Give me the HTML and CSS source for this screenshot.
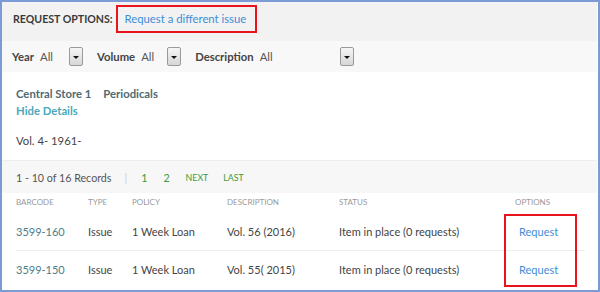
FILE: index.html
```html
<!DOCTYPE html>
<html lang="en">
<head>
  <meta charset="UTF-8">
  <title>Request options</title>
  <link rel="stylesheet" href="styles.css">
</head>
<body>
  <div class="frame">
    <div class="options-bar">
      <span class="options-label">REQUEST OPTIONS:</span>
      <a class="boxed different-issue">Request a different issue</a>
    </div>

    <div class="filters">
      <span class="filter-name">Year</span>
      <span class="filter-value">All</span>
      <span class="drop"></span>
      <span class="filter-name">Volume</span>
      <span class="filter-value narrow">All</span>
      <span class="drop"></span>
      <span class="filter-name">Description</span>
      <span class="filter-value wide">All</span>
      <span class="drop"></span>
    </div>

    <div class="details">
      <div class="location">
        <span>Central Store 1</span>
        <span>Periodicals</span>
      </div>
      <a class="hide-details">Hide Details</a>
      <div class="holdings">Vol. 4- 1961-</div>
    </div>

    <div class="pager">
      <span class="records">1 - 10 of 16 Records</span>
      <span class="sep">|</span>
      <a class="page">1</a>
      <a class="page">2</a>
      <a class="page small">NEXT</a>
      <a class="page small">LAST</a>
    </div>

    <div class="items">
      <table>
        <thead>
          <tr>
            <th class="c-barcode">BARCODE</th>
            <th class="c-type">TYPE</th>
            <th class="c-policy">POLICY</th>
            <th class="c-desc">DESCRIPTION</th>
            <th class="c-status">STATUS</th>
            <th class="c-opt">OPTIONS</th>
          </tr>
        </thead>
        <tbody>
          <tr>
            <td><a class="barcode">3599-160</a></td>
            <td>Issue</td>
            <td>1 Week Loan</td>
            <td>Vol. 56 (2016)</td>
            <td>Item in place (0 requests)</td>
            <td class="c-opt"><a class="request">Request</a></td>
          </tr>
          <tr class="last">
            <td><a class="barcode">3599-150</a></td>
            <td>Issue</td>
            <td>1 Week Loan</td>
            <td>Vol. 55( 2015)</td>
            <td>Item in place (0 requests)</td>
            <td class="c-opt"><a class="request">Request</a></td>
          </tr>
        </tbody>
      </table>
      <div class="request-box"></div>
    </div>
  </div>
</body>
</html>
```

FILE: styles.css
```css
body {
  margin: 0;
  font-family: Lato, "Open Sans", sans-serif;
  color: #444;
}
.frame {
  width: 600px;
  height: 292px;
  box-sizing: border-box;
  border: 2px solid #7c9ad6;
  padding-right: 1px;
  overflow: hidden;
  background: #fff;
}
.options-bar {
  height: 34px;
  padding-bottom: 5px;
  background: #f2f2f2;
  display: flex;
  align-items: center;
  padding-left: 11px;
}
.options-label {
  font-weight: bold;
  font-size: 10.6px;
  color: #3a3a3a;
}
.boxed {
  border: 2px solid #e8131b;
  padding: 5px 9px 6px 7px;
  line-height: 13px;
  margin-left: 3px;
}
.different-issue {
  color: #3d8ed6;
  font-size: 11.3px;
}
.filters {
  height: 31px;
  background: #f8f8f8;
  display: flex;
  align-items: center;
  padding-left: 10px;
  font-size: 11.3px;
}
.filter-name {
  font-weight: bold;
  color: #444;
}
.filter-value {
  color: #555;
  margin-left: 6px;
  width: 29px;
}
.filter-value.narrow {
  width: 26px;
}
.filter-value.wide {
  width: 80px;
}
.drop {
  width: 12px;
  height: 17px;
  border: 1px solid #9a9a9a;
  border-radius: 2px;
  background: linear-gradient(#f6f6f6, #d6d6d6);
  margin-right: 14px;
  position: relative;
}
.drop::after {
  content: "";
  position: absolute;
  left: 3px;
  top: 8px;
  border-left: 3px solid transparent;
  border-right: 3px solid transparent;
  border-top: 3px solid #111;
}
.details {
  padding: 14px 14px 0;
  height: 74px;
  font-size: 11.3px;
  line-height: 16px;
}
.location {
  display: flex;
  gap: 12px;
  font-weight: bold;
  color: #4d6b73;
}
.hide-details {
  display: block;
  margin-top: 1px;
  font-weight: bold;
  color: #4aa9bb;
}
.holdings {
  margin-top: 14px;
  color: #444;
}
.pager {
  height: 32px;
  background: #f7f7f7;
  border-top: 1px solid #eee;
  display: flex;
  align-items: center;
  padding-left: 14px;
  font-size: 10.7px;
}
.records {
  color: #555;
}
.sep {
  color: #ccc;
  margin: 0 14px 0 13px;
}
.page {
  color: #3c9a3c;
  margin-right: 16px;
}
.page.small {
  font-size: 8.8px;
  margin-right: 15px;
}
.items {
  position: relative;
  padding: 0 12px 0 14px;
}
table {
  width: 100%;
  border-collapse: collapse;
  font-size: 11px;
}
th {
  text-align: left;
  font-weight: normal;
  font-size: 8px;
  line-height: 10px;
  color: #999;
  padding: 4px 0 6px 0;
}
td {
  padding: 12px 0 11px 0;
  line-height: 14px;
  color: #444;
  border-bottom: 1px solid #eee;
}
tr.last td {
  border-bottom: none;
}
.c-barcode { width: 72px; }
.c-type { width: 44px; }
.c-policy { width: 95px; }
.c-desc { width: 112px; }
.c-status { width: 176px; }
td.c-opt {
  padding-left: 4px;
}
.barcode {
  color: #4a7d8c;
}
.request {
  color: #3d8ed6;
}
.request-box {
  position: absolute;
  left: 502px;
  top: 21px;
  width: 69px;
  height: 69px;
  border: 2px solid #e8131b;
}
```
